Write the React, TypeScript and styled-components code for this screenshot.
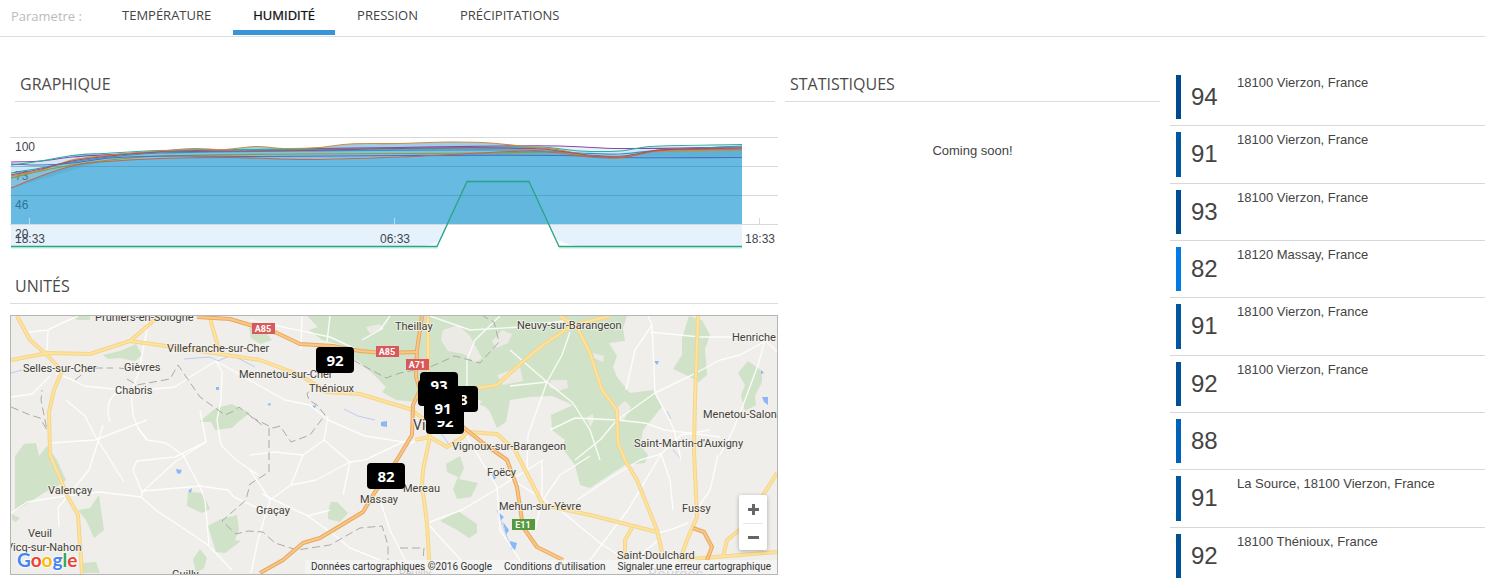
import React, { useState } from "react";
import styled, { createGlobalStyle } from "styled-components";

const GlobalStyle = createGlobalStyle`
  *, *::before, *::after { box-sizing: border-box; }
  body {
    margin: 0;
    background: #fff;
    color: #444;
    font-family: "Liberation Sans", Arial, sans-serif;
    font-size: 13px;
  }
`;

const TabBar = styled.nav`
  display: flex;
  align-items: flex-start;
  height: 37px;
  padding-left: 11px;
  border-bottom: 1px solid #ddd;
  font-family: "Open Sans", sans-serif;
  font-size: 13px;
`;

const TabLabel = styled.span`
  width: 91px;
  line-height: 32px;
  color: #bbb;
`;

const Tabs = styled.div`
  display: flex;
  gap: 2px;
`;

const Tab = styled.button<{ $active: boolean }>`
  height: 35px;
  padding: 0 20px;
  border: 0;
  border-bottom: 5px solid ${(p) => (p.$active ? "#3794d6" : "transparent")};
  background: none;
  color: ${(p) => (p.$active ? "#111" : "#444")};
  font: inherit;
  line-height: 30px;
  text-transform: uppercase;
  text-shadow: ${(p) => (p.$active ? "0 0 1px #778" : "none")};
  cursor: pointer;
`;

const Columns = styled.main`
  display: grid;
  grid-template-columns: 780fr 390fr 315fr;
  align-items: start;
  padding-top: 32px;
`;

const MainColumn = styled.div`
  min-width: 0;
`;

const StatsColumn = styled.section`
  min-width: 0;
  padding: 0 10px 0 5px;
`;

const Section = styled.section`
  padding: 0 2px 0 10px;
`;

const Heading = styled.h2<{ $inset?: boolean }>`
  height: 33px;
  margin: 0 ${(p) => (p.$inset ? "3px 0 5px" : "0")};
  padding: 0 5px;
  border-bottom: 1px solid #ddd;
  color: #4a4a4a;
  font-family: "Open Sans", sans-serif;
  font-size: 16px;
  font-weight: 400;
  line-height: 30px;
`;

const ChartFrame = styled.div`
  margin: 34px 0 21px;
  svg { display: block; width: 100%; }
`;

const ComingSoon = styled.p`
  margin: 41px 0 0;
  line-height: 16px;
  text-align: center;
`;

const MapFrame = styled.div`
  position: relative;
  height: 260px;
  margin-top: 11px;
  border: 1px solid #b5b5b5;
  background: #efeeea;
  overflow: hidden;
  > svg { display: block; width: 100%; height: 258px; }
`;

const Marker = styled.button<{ $x: number; $y: number }>`
  position: absolute;
  left: ${(p) => p.$x}px;
  top: ${(p) => p.$y}px;
  width: 38px;
  height: 26px;
  padding: 0;
  border: 0;
  border-radius: 4px;
  background: #000;
  color: #fff;
  font: 700 15px/26px "Open Sans", sans-serif;
  text-align: center;
`;

const ZoomControl = styled.div`
  position: absolute;
  right: 10px;
  bottom: 24px;
  width: 28px;
  padding: 0 4px;
  border-radius: 2px;
  background: #fff;
  box-shadow: 0 1px 4px rgba(0, 0, 0, 0.3);
`;

const ZoomButton = styled.button`
  display: flex;
  align-items: center;
  justify-content: center;
  width: 20px;
  height: 28px;
  padding: 0;
  border: 0;
  background: none;
  & + & { height: 27px; border-top: 1px solid #e6e6e6; }
`;

const Attribution = styled.div`
  position: absolute;
  right: 0;
  bottom: 0;
  display: flex;
  gap: 12px;
  padding: 0 6px;
  background: rgba(245, 245, 245, 0.75);
  color: #333;
  font: 10px/14px Roboto, sans-serif;
  a { color: inherit; text-decoration: none; }
`;

const UnitList = styled.ul`
  display: grid;
  grid-auto-rows: 1fr;
  min-height: 516px;
  margin: 0;
  padding: 0;
  list-style: none;
`;

const Unit = styled.li`
  display: flex;
  align-items: stretch;
  padding: 6px;
  border-bottom: 1px solid #d8d8d8;
  &:last-child { border-bottom-color: transparent; }
`;

const LevelBar = styled.span<{ $color: string }>`
  width: 5px;
  background: ${(p) => p.$color};
`;

const UnitValue = styled.span`
  width: 56px;
  padding-left: 10px;
  font-size: 24px;
  line-height: 44px;
`;

const UnitPlace = styled.span`
  line-height: 15px;
`;

const tabs = ["Température", "Humidité", "Pression", "Précipitations"];

const units = [
  { value: 94, place: "18100 Vierzon, France", color: "#00498c" },
  { value: 91, place: "18100 Vierzon, France", color: "#00569f" },
  { value: 93, place: "18100 Vierzon, France", color: "#004d94" },
  { value: 82, place: "18120 Massay, France", color: "#007ae6" },
  { value: 91, place: "18100 Vierzon, France", color: "#00559f" },
  { value: 92, place: "18100 Vierzon, France", color: "#005096" },
  { value: 88, place: "", color: "#0061b8" },
  { value: 91, place: "La Source, 18100 Vierzon, France", color: "#00569f" },
  { value: 92, place: "18100 Thénioux, France", color: "#005096" },
];

const markers = [
  { x: 305, y: 31, value: 92 },
  { x: 356, y: 147, value: 82 },
  { x: 429, y: 70, value: 88 },
  { x: 407, y: 64, value: 94 },
  { x: 409, y: 56, value: 93 },
  { x: 415, y: 92, value: 92 },
  { x: 413, y: 73, value: 91 },
  { x: 413, y: 79, value: 91 },
];

type Point = [number, number];

/* Catmull-Rom spline through the points, written as cubic Bézier segments. */
const curve = (points: Point[]) =>
  points.slice(1).reduce((d, p2, i) => {
    const p1 = points[i];
    const p0 = points[i - 1] ?? p1;
    const p3 = points[i + 2] ?? p2;
    const dx = (p2[0] - p1[0]) / 3;
    const slope = (a: Point, b: Point) => (b[1] - a[1]) / (b[0] - a[0]);
    const s1 = slope(p0 === p1 ? p1 : p0, p2);
    const s2 = slope(p1, p3);
    return `${d} C${p1[0] + dx} ${p1[1] + dx * s1} ${p2[0] - dx} ${p2[1] - dx * s2} ${p2[0]} ${p2[1]}`;
  }, `M${points[0][0]} ${points[0][1]}`);

const series: { color: string; points: Point[] }[] = [
  { color: "#8e44ad", points: [[11, 162], [41, 161], [72, 157], [120, 154], [170, 151], [290, 149], [400, 147.5], [500, 146], [560, 146], [620, 148.5], [742, 147]] },
  { color: "#2eae9c", points: [[11, 165], [41, 161], [72, 155.5], [102, 153.5], [160, 150.5], [240, 149.5], [400, 149], [540, 147], [580, 151], [620, 151], [650, 146.5], [742, 144.5]] },
  { color: "#3498c0", points: [[11, 173], [41, 168], [72, 162], [110, 157], [160, 153], [300, 151], [520, 150], [580, 153], [620, 154], [660, 150], [742, 146]] },
  { color: "#d08a3c", points: [[11, 176], [41, 170], [72, 160], [102, 156], [160, 151], [194, 148.5], [225, 149.5], [255, 146.5], [285, 148.5], [320, 147.5], [350, 144], [400, 143.5], [450, 142], [490, 143], [530, 147], [560, 150], [590, 156], [622, 158], [650, 152], [742, 150]] },
  { color: "#8b9c3f", points: [[11, 178], [41, 171], [72, 165], [110, 160], [160, 156], [300, 154], [500, 153], [560, 152], [590, 156], [622, 157], [660, 150], [742, 148]] },
  { color: "#4f6db8", points: [[11, 164], [41, 165], [72, 163], [110, 158], [170, 156], [260, 156.5], [400, 155.5], [560, 155.5], [620, 157.5], [742, 157.5]] },
  { color: "#c0674d", points: [[11, 188], [41, 176], [72, 166], [100, 162], [160, 158.5], [230, 157.5], [310, 159.5], [400, 157], [480, 153], [530, 151], [560, 153], [590, 157], [622, 157.5], [660, 150.5], [742, 149]] },
  { color: "#a0526b", points: [[11, 175], [41, 169], [72, 161], [110, 156], [160, 152], [300, 150.5], [430, 148], [540, 149], [590, 155], [622, 156], [660, 150], [742, 148]] },
];

const HumidityChart = () => (
  <svg viewBox="10 136 768 114" role="img" aria-label="Humidité sur 24 heures">
    <g stroke="#d9d9d9">
      <path d="M10 137.5H778M10 166.5H778M10 195.5H778M10 224.5H778" />
      <path d="M29.5 218V224M394.5 218V224M759.5 218V224" />
    </g>
    {series.slice(0, 4).map((s) => (
      <path key={s.color} d={`${curve(s.points)} V224 H11 Z`} fill="#7cc0e4" fillOpacity=".2" />
    ))}
    <path d={`${curve(series[6].points)} V224 H11 Z`} fill="#4bb0dc" fillOpacity=".73" />
    <path d={`${curve(series[3].points)} V157.5 L742 157.5 560 155 400 157 310 159 160 158 100 162 11 188Z`} fill="#53a9cc" fillOpacity=".48" />
    <path d="M11 225H448L444 235Q439 244 423 246H11ZM548 225H742V246H577Q560 243 555 238Z" fill="#3498db" fillOpacity=".12" />
    <path d="M449 224L467 182H529L547 224Z" fill="#3a9fd0" fillOpacity=".13" />
    <g stroke="#3887a8" strokeOpacity=".35">
      <path d="M11 166.5H742M11 195.5H742" />
    </g>
    <path d="M29.5 218V224M394.5 218V224" stroke="#b8dff1" />
    <g fill="#3f4650" fontFamily="Liberation Sans, Arial, sans-serif" fontSize="12">
      <text x="15" y="151">100</text>
      <text x="15" y="180" fill="#3b7d96">73</text>
      <text x="15" y="209" fill="#2b759b">46</text>
      <text x="15" y="238">20</text>
    </g>
    {series.map((s) => (
      <path key={s.color} d={curve(s.points)} fill="none" stroke={s.color} strokeWidth="1.1" />
    ))}
    <path d="M11 248H438M559 248H742" stroke="#bfe9d9" fill="none" />
    <path d="M11 246.5H437L467 181.5H529L559 246.5H742" stroke="#2aa583" strokeWidth="1.3" fill="none" />
    <g fill="#3f4650" fontFamily="Liberation Sans, Arial, sans-serif" fontSize="12" textAnchor="middle">
      <text x="30" y="243">18:33</text>
      <text x="395" y="243">06:33</text>
      <text x="760" y="243">18:33</text>
    </g>
  </svg>
);

const forests = [
  "M307 316L318 327 309 330 322 340 345 346 357 362 372 373 386 387 382 392 396 400 417 402 440 398 480 400 490 412 497 428 506 422 510 400 530 397 552 396 573 405 551 415 552 430 565 440 562 448 575 465 580 485 590 488 605 478 625 465 645 463 648 455 640 445 643 430 662 407 653 390 630 393 617 377 613 367 617 356 609 343 625 341 623 328 627 316Z",
  "M103 355L120 351 136 344 142 355 135 361 120 358 108 359Z",
  "M72 316H90V320H77Z",
  "M249 328L260 325 272 340 260 344 251 338Z",
  "M199 422L216 408 232 404 250 413 238 422 232 428 215 430 211 422Z",
  "M15 456L24 444 36 443 39 456 47 446 57 460 66 480 58 486 45 492 30 502 15 511Z",
  "M78 510L90 508 99 495 104 530 94 538 86 520Z",
  "M188 492L203 493 210 509 202 513 187 506Z",
  "M208 526L221 519 237 515 239 530 235 540 241 541 225 553 216 552Z",
  "M193 559L200 549 207 558 204 568 196 573Z",
  "M83 563L96 562 100 573H82Z",
  "M12 514L20 518 16 522 12 520Z",
  "M328 510L331 502 337 502 348 513 340 522 328 519Z",
  "M446 464L460 456 464 468 459 479 478 483 471 497 457 499 453 489 458 477 447 472Z",
  "M440 521L458 511 477 524 477 533 469 538 457 530Z",
  "M689 316L702 320 710 335 705 349 707 375 699 382 688 376 673 369 682 355 682 338Z",
  "M738 373L748 361 762 371 762 382 755 396 756 405 745 411 741 395 745 385Z",
  "M480 403L493 398 487 407 480 405Z",
];

const clearings = [
  "M443 330L458 325 470 336 482 358 476 363 464 354 448 351 441 340Z",
  "M366 327L380 324 384 329 370 334Z",
  "M492 341L502 330 512 334 508 343 496 348Z",
  "M497 375L520 367 523 381 503 385Z",
  "M551 380H567L568 388 558 391 549 387Z",
  "M593 353L604 356 603 362 594 358Z",
  "M618 407L625 401 631 407 624 420 616 421Z",
  "M587 417L593 414 594 420 590 427Z",
  "M340 352L360 362 364 370 346 366Z",
];

const minorRoads = [
  "M29 332L48 330 62 323 78 316M48 330L47 350M56 373L75 381 84 386 133 391 175 387 193 375 216 361 260 386",
  "M11 397L32 394 50 376M147 316L146 335 138 375 131 391 133 415 138 428 147 440",
  "M216 361L222 372 221 400 217 420 221 445 236 460 258 475",
  "M103 425L97 445 89 470 75 487 58 508 59 527M11 513L27 502 65 496 100 492 141 497 157 511 180 526 208 545 232 570",
  "M138 428L147 440 166 443 183 455 200 487 205 500 209 545M141 497L143 491 200 486 228 490 234 497 262 510",
  "M110 422Q102 397 125 388M66 400L85 416 94 434 124 482M50 443L95 440 147 420",
  "M141 493L175 462 206 442M137 460L133 470 142 492M137 461L175 457 206 442 200 410",
  "M260 386L285 400 310 405 328 420 365 436 410 443 428 437",
  "M302 316L301 350M330 316L327 342M390 316L380 330 362 340M250 320L330 337 362 352",
  "M328 416L324 440 303 455 291 485 270 500 258 540 251 573M324 440L350 462 365 460 405 441M350 462L343 495",
  "M250 455L275 452 303 455M291 485L316 480 350 462M250 470L270 500M308 516L333 534 350 548 380 560",
  "M380 500L390 530 405 560M427 523L462 510 495 490 543 460M427 523L470 570M460 425L497 487 500 530 520 560",
  "M262 494L308 516 330 510M430 316L470 330 520 327 570 320M467 390V360L475 340 500 316",
  "M570 332L562 355 547 382 537 410 528 435 527 470M510 350L547 382 573 403 590 430 600 460M547 382L510 386",
  "M648 316L652 325 655 393 667 415 674 430 681 460M652 325L635 350 626 390M655 393L617 420 600 440 575 460M655 393L692 375 720 360 740 355 777 335",
  "M617 420L645 423 665 430 720 437M550 430L575 418 617 420M577 500L610 478 640 460 661 454 670 480 673 510",
  "M661 454L681 435 710 430M650 332L700 337 760 337M777 352L765 340 758 365 745 400 733 430 720 455",
  "M718 455L710 490 698 508M590 560L605 540 628 510 661 454M657 533L670 530 688 523M640 555L661 538",
  "M542 460V500L535 530M543 500L560 475 590 456M497 470L560 510 600 543 626 560",
];

const borders = [
  "M11 407L30 415 40 418 47 430 41 400 42 390 M75 380L90 368 113 368",
  "M119 368L134 370 M127 379L137 385 170 379 178 365 200 397 225 415 234 411 239 407 262 425 M251 417L273 428 280 426 291 442 310 435 325 415 317 405 309 400 307 394 311 388",
  "M353 360L386 378 400 373 430 367 455 356 480 363 499 342 494 322 483 316",
  "M269 428L269 472 250 484 246 500 222 521 236 534 248 531 263 532 275 543 297 550 330 545 360 528 382 526 388 545 388 560 M400 548L424 548 423 560",
];

const trunkRoads = [
  "M17 316L30 340 47 355 62 371 54 390 49 412 50 455 68 497 78 515 82 574",
  "M11 360L48 353 90 354 130 341 152 322 158 316M130 341L166 346 220 354 260 360 300 375 327 392 360 394 383 401 410 409 425 420 430 437",
  "M210 318L220 354M428 316V375M415 440L430 437 447 447 463 437 467 432 497 434 515 450 543 505 590 515 657 532",
  "M430 437L423 470 422 485 427 523 430 574M477 388L497 385 520 364 543 345 573 325 610 316",
  "M560 316L577 327 590 353 602 390 617 410 618 443 625 460 637 480 657 530 662 552",
  "M698 316L695 400 694 450 697 517 687 540 680 560 777 552M632 528L625 540 625 560M723 557L727 540 743 527 777 473",
];

const motorways = [
  "M197 317L230 319 250 325 277 333 300 344 333 346 360 351 383 353 417 352",
  "M422 316L417 350 416 377 420 390 413 405 412 435 397 460 375 492 363 512 320 538 303 543 283 560 260 573",
  "M452 405L463 427 483 443 507 460 517 487 523 527 537 547 563 560",
  "M693 528L704 532 712 547 707 560",
];

const places = [
  { x: 95, y: 321, name: "Pruniers-en-Sologne" },
  { x: 167, y: 352, name: "Villefranche-sur-Cher" },
  { x: 23, y: 372, name: "Selles-sur-Cher" },
  { x: 124, y: 371, name: "Gièvres" },
  { x: 115, y: 394, name: "Chabris" },
  { x: 239, y: 378, name: "Mennetou-sur-Cher" },
  { x: 309, y: 392, name: "Thénioux" },
  { x: 395, y: 330, name: "Theillay" },
  { x: 517, y: 329, name: "Neuvy-sur-Barangeon" },
  { x: 732, y: 341, name: "Henriche" },
  { x: 703, y: 418, name: "Menetou-Salon" },
  { x: 634, y: 447, name: "Saint-Martin-d'Auxigny" },
  { x: 452, y: 450, name: "Vignoux-sur-Barangeon" },
  { x: 487, y: 476, name: "Foëcy" },
  { x: 403, y: 492, name: "Mereau" },
  { x: 360, y: 503, name: "Massay" },
  { x: 256, y: 514, name: "Graçay" },
  { x: 48, y: 494, name: "Valençay" },
  { x: 28, y: 537, name: "Veuil" },
  { x: 6, y: 551, name: "Vicq-sur-Nahon" },
  { x: 172, y: 578, name: "Guilly" },
  { x: 499, y: 510, name: "Mehun-sur-Yèvre" },
  { x: 682, y: 512, name: "Fussy" },
  { x: 617, y: 559, name: "Saint-Doulchard" },
  { x: 399, y: 577, name: "Reuilly" },
];

const shields = [
  { x: 252, y: 323, name: "A85", color: "#d9585c" },
  { x: 376, y: 346, name: "A85", color: "#d9585c" },
  { x: 406, y: 359, name: "A71", color: "#d9585c" },
  { x: 512, y: 519, name: "E11", color: "#559b3d" },
];

const logo = [
  ["G", "#4285f4"], ["o", "#ea4335"], ["o", "#fbbc05"],
  ["g", "#4285f4"], ["l", "#34a853"], ["e", "#ea4335"],
];

const RegionMap = () => (
  <svg viewBox="11 316 766 258" preserveAspectRatio="xMinYMin slice" role="img" aria-label="Carte des unités">
    <rect x="11" y="316" width="766" height="258" fill="#efeeea" />
    <g fill="#d0e3c8">{forests.map((d) => <path key={d} d={d} />)}</g>
    <g fill="#eceae5">{clearings.map((d) => <path key={d} d={d} />)}</g>
    <g fill="#8ab8f5">
      <path d="M176 469L182 470 180 474 177 473ZM188 491L192 488 191 493ZM381 422L387 421 387 427 381 426ZM267 404L271 403 270 406ZM312 406L316 405 315 409ZM654 361L659 361 657 365ZM762 397L768 397 768 405 764 402ZM761 370L764 373 761 374ZM498 512L504 517 501 520ZM503 522L509 530 506 535ZM510 541L517 543 515 550 511 549ZM492 474L497 476 494 480ZM216 387H219V390H216Z" />
    </g>
    <g fill="none" stroke="#b9cdf3">
      <path d="M184 359L210 357 218 361 232 355 255 367 M11 373L22 370 M344 409L358 416 375 420 M441 433L450 446 M497 510L510 545" />
      <path d="M667 411L671 419M673 450L682 460" />
    </g>
    <g fill="none" stroke="#fff" strokeOpacity=".85" strokeWidth="1.4" strokeLinejoin="round">
      {minorRoads.map((d) => <path key={d} d={d} />)}
    </g>
    <g fill="none" stroke="#aaa" strokeWidth="1" strokeDasharray="8 4">
      {borders.map((d) => <path key={d} d={d} />)}
    </g>
    <g fill="none" strokeLinejoin="round">
      <g stroke="#f3d58e" strokeWidth="4">{trunkRoads.map((d) => <path key={d} d={d} />)}</g>
      <g stroke="#ffe29b" strokeWidth="2">{trunkRoads.map((d) => <path key={d} d={d} />)}</g>
      <g stroke="#e8a860" strokeWidth="4">{motorways.map((d) => <path key={d} d={d} />)}</g>
      <g stroke="#fac785" strokeWidth="2">{motorways.map((d) => <path key={d} d={d} />)}</g>
    </g>
    <g fontFamily="Roboto, sans-serif" fontSize="11" fill="#443f3a" stroke="#f5f4f0" strokeWidth="2" strokeOpacity=".7" paintOrder="stroke">
      {places.map((p) => <text key={p.name} x={p.x} y={p.y}>{p.name}</text>)}
      <text x="413" y="430" fontSize="14">Vierzon</text>
      <text x="648" y="579" fontSize="15" fill="#777">Bourges</text>
    </g>
    {shields.map((s) => (
      <g key={`${s.name}${s.x}`}>
        <rect x={s.x} y={s.y} width="23" height="11" fill={s.color} />
        <text x={s.x + 11} y={s.y + 9} fill="#fff" fontFamily="Roboto, sans-serif" fontSize="9" fontWeight="700" textAnchor="middle">{s.name}</text>
      </g>
    ))}
    <text x="17" y="567" fontFamily="Lato, sans-serif" fontSize="19" fontWeight="700" stroke="#fff" strokeWidth="2" strokeOpacity=".7" paintOrder="stroke">
      {logo.map(([letter, color], i) => <tspan key={i} fill={color}>{letter}</tspan>)}
    </text>
  </svg>
);

export default function App() {
  const [active, setActive] = useState("Humidité");
  return (
    <>
      <GlobalStyle />
      <TabBar aria-label="Paramètre">
        <TabLabel>Parametre :</TabLabel>
        <Tabs>
          {tabs.map((tab) => (
            <Tab key={tab} $active={tab === active} aria-pressed={tab === active} onClick={() => setActive(tab)}>
              {tab}
            </Tab>
          ))}
        </Tabs>
      </TabBar>
      <Columns>
        <MainColumn>
          <Section>
            <Heading $inset>GRAPHIQUE</Heading>
            <ChartFrame><HumidityChart /></ChartFrame>
          </Section>
          <Section>
            <Heading>UNITÉS</Heading>
            <MapFrame>
              <RegionMap />
              {markers.map((m, i) => (
                <Marker key={i} $x={m.x} $y={m.y}>{m.value}</Marker>
              ))}
              <ZoomControl>
                <ZoomButton aria-label="Zoom avant">
                  <svg width="11" height="11"><path d="M5.5 0V11M0 5.5H11" stroke="#666" strokeWidth="3" /></svg>
                </ZoomButton>
                <ZoomButton aria-label="Zoom arrière">
                  <svg width="11" height="11"><path d="M0 5.5H11" stroke="#666" strokeWidth="3" /></svg>
                </ZoomButton>
              </ZoomControl>
              <Attribution>
                <span>Données cartographiques ©2016 Google</span>
                <a href="#conditions">Conditions d'utilisation</a>
                <a href="#signaler">Signaler une erreur cartographique</a>
              </Attribution>
            </MapFrame>
          </Section>
        </MainColumn>
        <StatsColumn>
          <Heading>STATISTIQUES</Heading>
          <ComingSoon>Coming soon!</ComingSoon>
        </StatsColumn>
        <UnitList>
          {units.map((u, i) => (
            <Unit key={i}>
              <LevelBar $color={u.color} />
              <UnitValue>{u.value}</UnitValue>
              <UnitPlace>{u.place}</UnitPlace>
            </Unit>
          ))}
        </UnitList>
      </Columns>
    </>
  );
}
